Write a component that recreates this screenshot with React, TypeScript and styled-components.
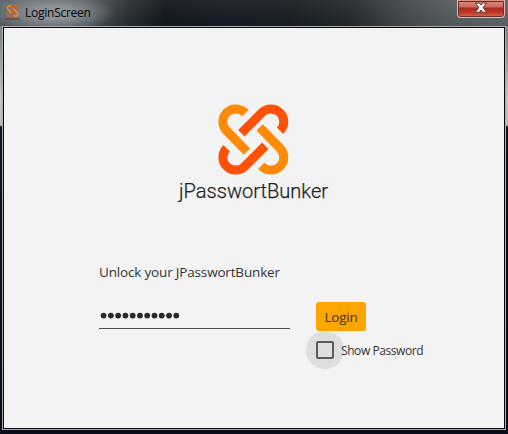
import React from 'react';
import styled, { createGlobalStyle } from 'styled-components';

const GlobalStyle = createGlobalStyle`
  * { box-sizing: border-box; }
  body { margin: 0; overflow: hidden; }
`;

const Window = styled.div`
  width: 508px;
  height: 434px;
  padding: 0 2px 4px;
  display: flex;
  flex-direction: column;
  font-family: 'Open Sans', 'Noto Sans', sans-serif;
  background:
    linear-gradient(180deg, #70767a 0, #858a8d 40px, #c5c5c5 100px, #b8b8b8 125px, #10131c 127px, #090b18 434px);
`;

const TitleBar = styled.header`
  height: 26px;
  flex: none;
  margin: 0 -2px;
  display: flex;
  align-items: flex-start;
  padding: 0 3px 0 5px;
  background:
    radial-gradient(ellipse 62px 20px at 54px 13px, rgba(158, 164, 168, 0.75) 30%, rgba(130, 136, 140, 0) 100%),
    linear-gradient(180deg, rgba(70, 76, 80, 0.22), rgba(0, 0, 0, 0.2)),
    linear-gradient(98deg, #6d7377 0, #60666a 85px, #30363b 128px, #151a21 165px, #1b1f29 220px, #1d2229 290px, #292e30 345px, #525659 405px, #676d70 450px, #70767a 508px);
`;

const AppIcon = styled.svg`
  width: 15px;
  height: 16px;
  margin-top: 5px;
`;

const Title = styled.span`
  margin: 5px auto 0 5px;
  font-size: 12px;
  line-height: 16px;
  letter-spacing: -0.25px;
  color: #050505;
`;

const CloseButton = styled.button`
  width: 48px;
  height: 18px;
  padding: 0;
  border: 1px solid #e5b9b1;
  border-top: 0;
  border-radius: 0 0 4px 4px;
  outline: 1px solid #6b302a;
  outline-offset: -2px;
  background: linear-gradient(180deg, #dc9385 0, #c9695b 7px, #ad281b 8px, #c33d29 13px, #dc7863 18px);
  display: flex;
  justify-content: center;
  align-items: flex-start;
`;

const Content = styled.main`
  flex: 1;
  border: 1px solid #aaadaf;
  outline: 1px solid #08090d;
  outline-offset: -2px;
  background: #f3f3f3;
  padding: 74px 0 0 97px;
`;

const Logo = styled.svg`
  display: block;
  width: 160px;
  height: 106px;
  margin-left: 74px;
`;

const Prompt = styled.label`
  display: block;
  margin-top: 56px;
  font-size: 13.5px;
  line-height: 18px;
  letter-spacing: -0.17px;
  color: #333;
  margin-left: -1px;
`;

const Form = styled.form`
  display: grid;
  grid-template-columns: 191px 130px;
  column-gap: 26px;
  margin-top: 21px;
  margin-left: -1px;
`;

const Password = styled.div`
  height: 27px;
  border-bottom: 1px solid #4d4d4d;
`;

const Mask = styled.svg`
  display: block;
  width: 90px;
  height: 26px;
  fill: #292929;
`;

const LoginButton = styled.button`
  width: 50px;
  height: 29px;
  border: 0;
  border-radius: 3px;
  padding: 0;
  background: #ffa500;
  color: #393326;
  font: 13.5px/28px 'Open Sans', 'Noto Sans', sans-serif;
  letter-spacing: -0.25px;
`;

const CheckRow = styled.div`
  grid-column: 2;
  display: flex;
  align-items: center;
  margin-left: -10px;
`;

const Halo = styled.span`
  width: 38px;
  height: 38px;
  flex: none;
  border-radius: 50%;
  background: #dedede;
  display: grid;
  place-items: center;
`;

const Checkbox = styled.span`
  width: 18px;
  height: 18px;
  border: 2px solid #5b5b5b;
  border-radius: 2px;
`;

const CheckLabel = styled.span`
  margin: 1px 0 0 -3px;
  font-size: 12px;
  line-height: 16px;
  letter-spacing: -0.42px;
  color: #333;
  white-space: nowrap;
`;

const Knot = () => (
  <g fill="none" strokeWidth="27">
    <g stroke="#ff8a08">
      <path d="M94 39.6 L91.2 36.8 A38.5 38.5 0 0 0 36.8 91.2 L99 155" />
      <path d="M142 197.4 L144.8 200.2 A38.5 38.5 0 0 0 199.2 145.8 L137 82" />
    </g>
    <g stroke="#ff5208">
      <path d="M82 99.6 L144.8 36.8 A38.5 38.5 0 0 1 199.2 91.2 L198 92.4" />
      <path d="M154 137.4 L91.2 200.2 A38.5 38.5 0 0 1 36.8 145.8 L38 144.6" />
    </g>
  </g>
);

export default function App() {
  return (
    <>
      <GlobalStyle />
      <Window>
        <TitleBar>
          <AppIcon viewBox="0 0 15 16">
            <svg x="1.5" y="0" width="12" height="12" viewBox="11 11 214 215"><Knot /></svg>
            <path d="M0 14H15" stroke="#44494c" strokeWidth="1.5" opacity=".7" />
          </AppIcon>
          <Title>LoginScreen</Title>
          <CloseButton aria-label="Close">
            <svg width="14" height="15" viewBox="0 0 14 15">
              <path d="M1.5 3H5.4L7 5L8.6 3H12.5L9.2 7.5L12.5 12.3H8.6L7 10L5.4 12.3H1.5L4.8 7.5Z" fill="#f5f5f5" stroke="#574140" />
            </svg>
          </CloseButton>
        </TitleBar>
        <Content>
          <Logo viewBox="0 0 160 106">
            <g transform="translate(40 -1) scale(.33333)"><Knot /></g>
            <text x="5" y="97" fontFamily="Roboto, sans-serif" fontSize="20.5" fontWeight="300" fill="#222" stroke="#222" strokeWidth=".25" textLength="149" lengthAdjust="spacingAndGlyphs">jPasswortBunker</text>
          </Logo>
          <Prompt>Unlock your JPasswortBunker</Prompt>
          <Form onSubmit={(event) => event.preventDefault()}>
            <Password role="textbox" aria-label="Password">
              <Mask viewBox="0 0 90 26">
                {Array.from({ length: 11 }, (_, i) => <circle key={i} cx={4.6 + i * 7.27} cy="13.6" r="2.9" />)}
              </Mask>
            </Password>
            <LoginButton>Login</LoginButton>
            <CheckRow>
              <Halo><Checkbox role="checkbox" aria-checked={false} /></Halo>
              <CheckLabel>Show Password</CheckLabel>
            </CheckRow>
          </Form>
        </Content>
      </Window>
    </>
  );
}
